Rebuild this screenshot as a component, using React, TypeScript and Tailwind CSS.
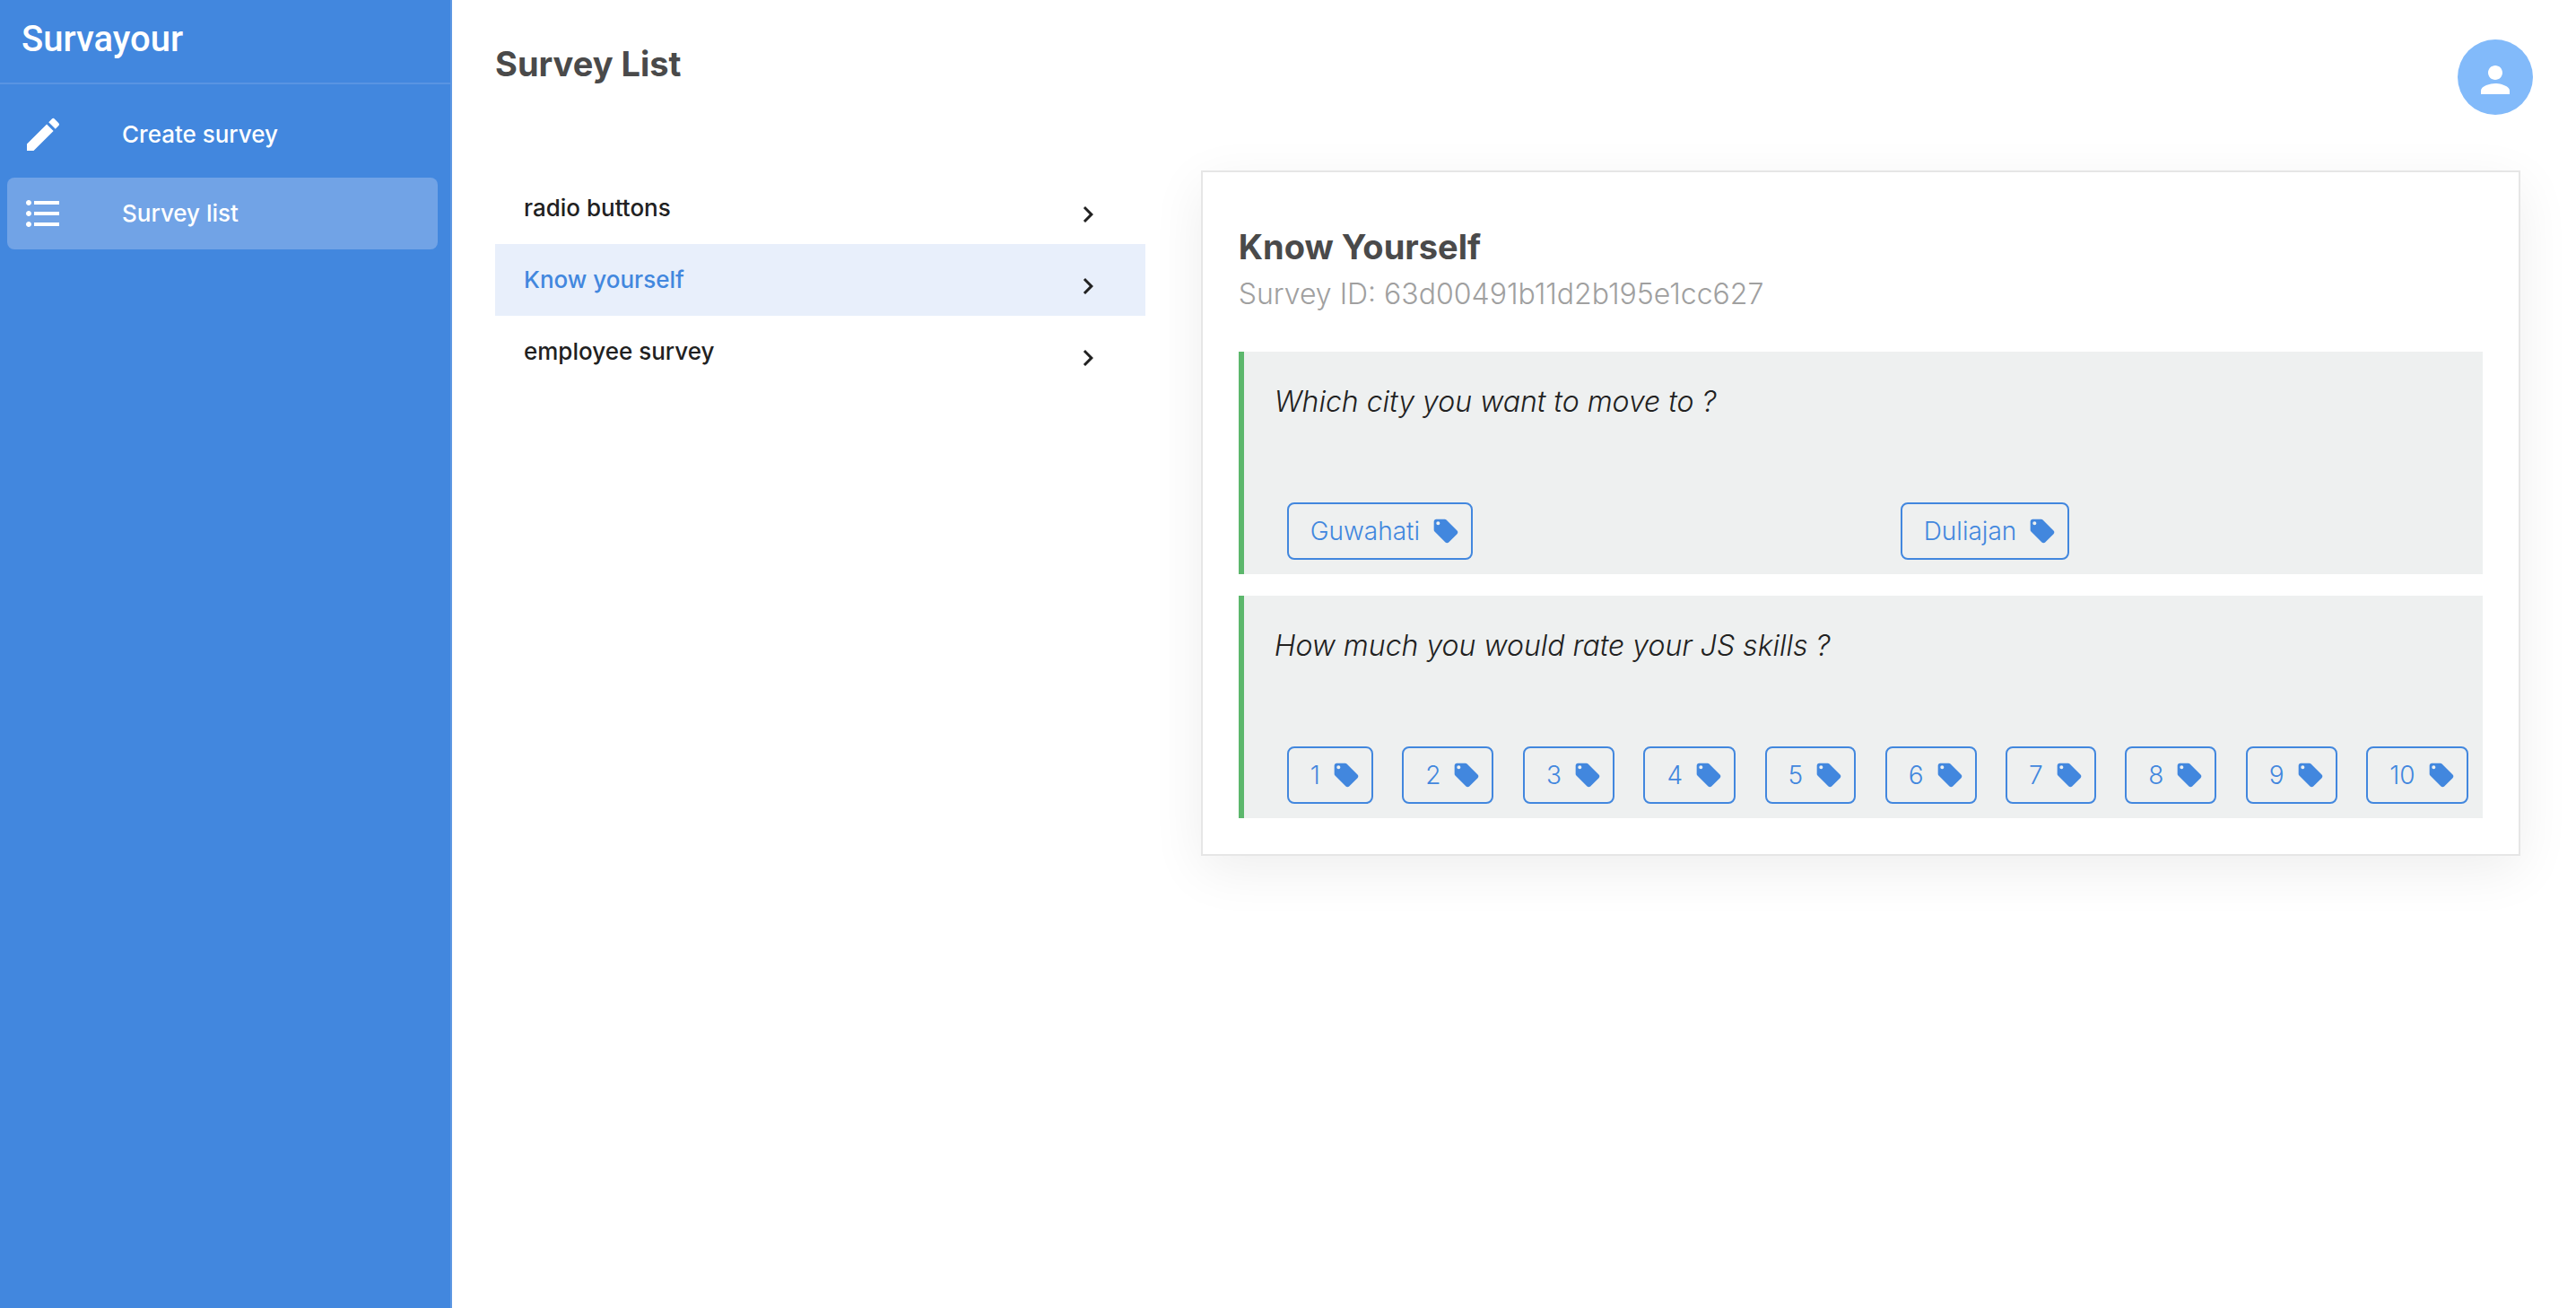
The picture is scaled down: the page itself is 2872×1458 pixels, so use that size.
import React from "react";
import {
  MdChevronRight,
  MdCreate,
  MdFormatListBulleted,
  MdLocalOffer,
  MdPerson,
} from "react-icons/md";

const navItems = [
  { label: "Create survey", Icon: MdCreate, active: false },
  { label: "Survey list", Icon: MdFormatListBulleted, active: true },
];

const surveys = [
  { name: "radio buttons", selected: false },
  { name: "Know yourself", selected: true },
  { name: "employee survey", selected: false },
];

const questions = [
  { text: "Which city you want to move to ?", options: ["Guwahati", "Duliajan"] },
  {
    text: "How much you would rate your JS skills ?",
    options: ["1", "2", "3", "4", "5", "6", "7", "8", "9", "10"],
  },
];

function Sidebar() {
  return (
    <aside className="w-[504px] shrink-0 border-r-2 border-[#5e98e3] bg-[#4287de] text-white">
      <div className="flex h-[94px] items-start border-b-2 border-[#5994e2] px-6 pt-5 font-[Roboto,sans-serif] text-[40px] leading-[48px] font-medium">
        Survayour
      </div>
      <nav className="flex flex-col gap-2 py-4 pr-3.5 pl-2">
        {navItems.map(({ label, Icon, active }) => (
          <a
            key={label}
            href="#"
            aria-current={active ? "page" : undefined}
            className={
              active
                ? "flex h-20 items-center rounded-lg bg-[#71a3e6] px-4"
                : "flex h-20 items-center rounded-lg px-4"
            }
          >
            <span className="w-28">
              <Icon className="size-12" aria-hidden />
            </span>
            <span className="text-[26px] leading-10 font-medium">{label}</span>
          </a>
        ))}
      </nav>
    </aside>
  );
}

function SurveyList() {
  return (
    <ul>
      {surveys.map(({ name, selected }) => (
        <li key={name}>
          <button
            type="button"
            className={
              selected
                ? "flex h-20 w-full items-center justify-between bg-[#e8effb] pr-[46px] pl-8 text-left"
                : "flex h-20 w-full items-center justify-between pr-[46px] pl-8 text-left"
            }
          >
            <span
              className={
                selected
                  ? "text-[26px] leading-10 font-medium text-[#4287de]"
                  : "text-[26px] leading-10 font-medium text-[#212121]"
              }
            >
              {name}
            </span>
            <span className="pt-3.5">
              <MdChevronRight className="size-9 text-[#212121]" aria-hidden />
            </span>
          </button>
        </li>
      ))}
    </ul>
  );
}

function Option({ label }: { label: string }) {
  return (
    <li className="flex-auto">
      <button
        type="button"
        className="flex h-16 items-center gap-[13px] rounded-lg border-2 border-[#4287de] pr-3 pl-6 text-[28px] leading-10 font-light text-[#4287de]"
      >
        {label}
        <MdLocalOffer className="size-8" aria-hidden />
      </button>
    </li>
  );
}

function SurveyCard() {
  return (
    <article className="border-2 border-[#e6e6e6] bg-white p-10 shadow-[0_16px_56px_rgba(0,0,0,0.07)]">
      <h2 className="pt-4 text-[38px] leading-[54px] font-bold text-[#4a4a4a]">Know Yourself</h2>
      <p className="pt-1 text-[32px] leading-[44px] font-light text-[#a0a0a0]">
        Survey ID: 63d00491b11d2b195e1cc627
      </p>
      <div className="flex flex-col gap-6 pt-[42px]">
        {questions.map(({ text, options }) => (
          <section key={text} className="border-l-[6px] border-[#5cb76c] bg-[#eef0f0] pt-8 pb-4">
            <h3 className="pl-[34px] text-[32px] leading-[48px] font-light text-[#212121] italic">
              {text}
            </h3>
            <ul className="-mr-4 flex pt-[88px] pl-12">
              {options.map((option) => (
                <Option key={option} label={option} />
              ))}
            </ul>
          </section>
        ))}
      </div>
    </article>
  );
}

export default function App() {
  return (
    <div className="flex min-h-screen bg-white font-[Inter,sans-serif]">
      <Sidebar />
      <div className="min-w-0 flex-1 overflow-hidden">
        <header className="flex justify-between pt-11 pr-12 pl-12">
          <h1 className="text-[38px] leading-[54px] font-bold text-[#4a4a4a]">Survey List</h1>
          <button
            type="button"
            aria-label="Account"
            className="flex size-[84px] items-center justify-center rounded-full bg-[#82bafa] pt-1.5 text-white"
          >
            <MdPerson className="size-12" aria-hidden />
          </button>
        </header>
        <main className="grid grid-cols-[33fr_67fr] items-start gap-[62px] pt-[62px] pr-[62px] pb-16 pl-12">
          <div className="pt-0.5">
            <SurveyList />
          </div>
          <SurveyCard />
        </main>
      </div>
    </div>
  );
}
